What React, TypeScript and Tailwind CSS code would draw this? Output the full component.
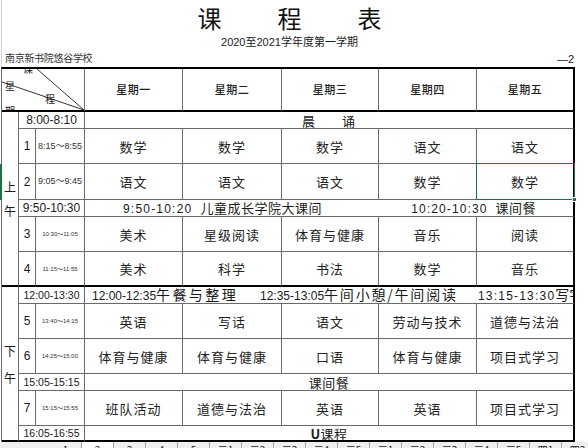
import type { ReactNode } from "react";

const cell =
  "flex items-center justify-center border-r border-b border-[#6a6a6a] overflow-hidden whitespace-nowrap leading-none";
const subj = "text-[13px] leading-none tracking-[1px] font-['Noto_Sans_CJK_SC',sans-serif] text-[#222]";
const thickB = "border-b-2 border-b-black";
const thickR = "border-r-2 border-r-black";

type Lesson = { n: string; time: string; small: boolean; subjects: string[] };

const days = ["星期一", "星期二", "星期三", "星期四", "星期五"];

const morning1: Lesson[] = [
  { n: "1", time: "8:15～8:55", small: false, subjects: ["数学", "数学", "数学", "语文", "语文"] },
  { n: "2", time: "9:05～9:45", small: false, subjects: ["语文", "语文", "语文", "数学", "数学"] },
];
const morning2: Lesson[] = [
  { n: "3", time: "10:30～11:05", small: true, subjects: ["美术", "星级阅读", "体育与健康", "音乐", "阅读"] },
  { n: "4", time: "11:15～11:55", small: true, subjects: ["美术", "科学", "书法", "数学", "音乐"] },
];
const afternoon1: Lesson[] = [
  { n: "5", time: "13:40～14:15", small: true, subjects: ["英语", "写话", "语文", "劳动与技术", "道德与法治"] },
  { n: "6", time: "14:25～15:00", small: true, subjects: ["体育与健康", "体育与健康", "口语", "体育与健康", "项目式学习"] },
];
const afternoon2: Lesson = {
  n: "7",
  time: "15:15～15:55",
  small: true,
  subjects: ["班队活动", "道德与法治", "英语", "英语", "项目式学习"],
};

const tabs = ["1", "2", "3", "4", "5", "二1", "二2", "二3", "二4", "二5", "三1", "三2", "三3", "三4", "三5", "四1", "四2"];

function LessonRow({ l, bottom = "", selected = -1 }: { l: Lesson; bottom?: string; selected?: number }) {
  return (
    <>
      <div className={`${cell} ${bottom} text-[12px]`}>{l.n}</div>
      <div className={`${cell} ${bottom} text-[#333] ${l.small ? "text-[6px]" : "text-[9px]"}`}>{l.time}</div>
      {l.subjects.map((s, i) => (
        <div key={i} className={`${cell} ${bottom} ${i === 4 ? thickR : ""} ${i === selected ? "relative overflow-visible" : ""}`}>
          <span className={subj}>{s}</span>
          {i === selected && (
            // 선택된 셀 테두리
            <div className="absolute -top-px -left-px right-[-2px] bottom-[-1px] border border-[#1e7145]">
              <div className="absolute -right-[3px] -bottom-[3px] w-[5px] h-[5px] bg-[#1e7145] border border-white" />
            </div>
          )}
        </div>
      ))}
    </>
  );
}

function Merged({ children, bottom = "", className = "" }: { children: ReactNode; bottom?: string; className?: string }) {
  return <div className={`${cell} ${thickR} ${bottom} col-span-5 ${className}`}>{children}</div>;
}

export default function App() {
  return (
    <div className="relative w-[588px] h-[448px] overflow-hidden bg-white text-[#1a1a1a] font-['Liberation_Sans','Noto_Sans_CJK_SC',sans-serif]">
      {/* 제목 영역 */}
      <div className="ml-[1px] w-[576px] border-l border-[#d0d0d0]">
        <div className="h-[36px] flex items-center justify-center gap-[56px] text-[24px] leading-none font-['Noto_Sans_CJK_SC',sans-serif] text-[#111]">
          <span>课</span>
          <span>程</span>
          <span>表</span>
        </div>
        <div className="h-[12px] flex items-center justify-center text-[11px] leading-none text-[#222]">
          2020至2021学年度第一学期
        </div>
        <div className="mt-[5px] h-[12px] flex items-center justify-between pl-[3px] pr-[3px] text-[10px] leading-none">
          <span className="tracking-[-0.3px] text-[#333]">南京新书院悠谷学校</span>
          <span className="text-[11px]">—2</span>
        </div>
        <div className="h-[2px]" />
      </div>

      {/* 시간표 */}
      <div className="ml-[1px] w-fit border-l border-l-[#6a6a6a] border-t-2 border-t-black grid grid-cols-[17px_17px_49px_98px_99px_97px_98px_98px] grid-rows-[43px_17px_35px_36px_17px_35px_35px_17px_35px_35px_17px_35px_16px]">
        <div className={`${cell} ${thickB} col-span-3 relative`}>
          <svg className="absolute inset-0" width="83" height="41" viewBox="0 0 83 41">
            <line x1="35" y1="0" x2="82" y2="41" stroke="#333" strokeWidth="1" />
            <line x1="0" y1="13" x2="82" y2="41" stroke="#333" strokeWidth="1" />
          </svg>
          <span className="absolute left-[21px] top-[-4px] text-[10px] leading-none">课</span>
          <span className="absolute left-[3px] top-[13px] text-[10px] leading-none">星</span>
          <span className="absolute left-[43px] top-[26px] text-[10px] leading-none">程</span>
          <span className="absolute left-[3px] top-[38px] text-[10px] leading-none">期</span>
        </div>
        {days.map((d, i) => (
          <div key={d} className={`${cell} ${thickB} ${i === 4 ? thickR : ""}`}>
            <span className="text-[11px] font-medium tracking-[0.5px] font-['Noto_Sans_CJK_SC',sans-serif] text-[#222]">{d}</span>
          </div>
        ))}

        <div className={`${cell} ${thickB} row-span-6 flex-col gap-[12px] text-[12px] pt-[2px]`}>
          <span>上</span>
          <span>午</span>
        </div>
        <div className={`${cell} col-span-2 text-[12px]`}>8:00-8:10</div>
        <Merged>
          <div className={`${subj} flex gap-[26px]`}>
            <span>晨</span>
            <span>诵</span>
          </div>
        </Merged>

        <LessonRow l={morning1[0]} />
        <LessonRow l={morning1[1]} selected={4} />

        <div className={`${cell} col-span-2 text-[12px]`}>9:50-10:30</div>
        <Merged className="!justify-between pl-[38px] pr-[37px]">
          <span>
            <span className="text-[12px] tracking-[1.2px]">9:50-10:20</span>
            <span className="ml-[8px] text-[13px] tracking-[0.5px] font-['Noto_Sans_CJK_SC',sans-serif]">儿童成长学院大课间</span>
          </span>
          <span>
            <span className="text-[12px] tracking-[1.1px]">10:20-10:30</span>
            <span className="ml-[8px] text-[13px] tracking-[0.5px] font-['Noto_Sans_CJK_SC',sans-serif]">课间餐</span>
          </span>
        </Merged>

        <LessonRow l={morning2[0]} />
        <LessonRow l={morning2[1]} bottom={thickB} />

        <div className={`${cell} ${thickB} row-span-6 flex-col gap-[15px] text-[12px] pt-[4px]`}>
          <span>下</span>
          <span>午</span>
        </div>
        <div className={`${cell} col-span-2 text-[10.5px]`}>12:00-13:30</div>
        <Merged className="!justify-start pl-[7px]">
          <span className="w-[168px] shrink-0">
            <span className="text-[12px]">12:00-12:35</span>
            <span className="text-[14px] tracking-[2.4px] font-['Noto_Sans_CJK_SC',sans-serif]">午餐与整理</span>
          </span>
          <span className="w-[218px] shrink-0">
            <span className="text-[12px]">12:35-13:05</span>
            <span className="text-[14px] tracking-[1.8px] font-['Noto_Sans_CJK_SC',sans-serif]">午间小憩/午间阅读</span>
          </span>
          <span className="shrink-0">
            <span className="text-[12px] tracking-[1.2px]">13:15-13:30</span>
            <span className="text-[14px] font-['Noto_Sans_CJK_SC',sans-serif]">写字练习</span>
          </span>
        </Merged>

        <LessonRow l={afternoon1[0]} />
        <LessonRow l={afternoon1[1]} />

        <div className={`${cell} col-span-2 text-[10.5px]`}>15:05-15:15</div>
        <Merged>
          <span className="text-[13px] tracking-[0.5px] font-['Noto_Sans_CJK_SC',sans-serif]">课间餐</span>
        </Merged>

        <LessonRow l={afternoon2} />

        <div className={`${cell} ${thickB} col-span-2 text-[10.5px]`}>16:05-16:55</div>
        <Merged bottom={thickB}>
          <span className="text-[13px] tracking-[0.5px] font-['Noto_Sans_CJK_SC',sans-serif]">
            <span className="font-bold">U</span>课程
          </span>
        </Merged>
      </div>

      {/* 시트 탭 */}
      <div className="h-[6px] flex bg-[#efefef] overflow-hidden pl-[50px]">
        {tabs.map((t, i) => (
          <div
            key={t}
            className={`w-[32px] shrink-0 border-r border-[#a0a0a0] text-center text-[10px] leading-[12px] pt-[2px] font-['Noto_Sans_CJK_SC',sans-serif] ${
              i === 1 ? "bg-white" : ""
            }`}
          >
            {t}
          </div>
        ))}
      </div>

      {/* 선택 행 표시 */}
      <div className="absolute left-0 top-[164px] w-[2px] h-[36px] bg-[#1e7145]" />
    </div>
  );
}
